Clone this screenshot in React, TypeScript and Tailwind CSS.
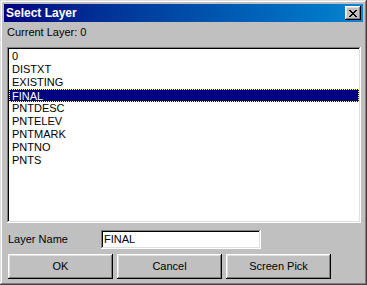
const layers = ['0', 'DISTXT', 'EXISTING', 'FINAL', 'PNTDESC', 'PNTELEV', 'PNTMARK', 'PNTNO', 'PNTS'];

const raised =
  'shadow-[inset_-1px_-1px_#000000,inset_1px_1px_#ffffff,inset_-2px_-2px_#808080,inset_2px_2px_#dfdfdf]';
const sunken =
  'shadow-[inset_-1px_-1px_#ffffff,inset_1px_1px_#808080,inset_-2px_-2px_#dfdfdf,inset_2px_2px_#000000]';

function Button({ label }: { label: string }) {
  return (
    <button className={`w-[105px] h-[25px] bg-[#c0c0c0] text-[11px] text-black ${raised}`}>
      {label}
    </button>
  );
}

export default function App() {
  const selected = 'FINAL';

  return (
    <div
      className="w-[367px] h-[285px] bg-[#c0c0c0] flex flex-col pt-[4px] pl-[4px] pr-[4px] shadow-[inset_-1px_-1px_#404040,inset_1px_1px_#dfdfdf,inset_-2px_-2px_#808080,inset_2px_2px_#ffffff] text-black"
      style={{ fontFamily: '"Liberation Sans", Arial, sans-serif' }}
    >
      <div className="h-[18px] flex items-center justify-between bg-gradient-to-r from-[#000080] to-[#1084d0] pl-[2px] pr-[2px]">
        <span className="text-white font-bold text-[12px] leading-none">Select Layer</span>
        <button className={`w-[16px] h-[14px] bg-[#c0c0c0] flex items-center justify-center ${raised}`}>
          <svg width="8" height="7" viewBox="0 0 8 7" shapeRendering="crispEdges">
            <path
              d="M0 0h2v1h-2zM6 0h2v1h-2zM1 1h2v1h-2zM5 1h2v1h-2zM2 2h4v1h-4zM3 3h2v1h-2zM2 4h4v1h-4zM1 5h2v1h-2zM5 5h2v1h-2zM0 6h2v1h-2zM6 6h2v1h-2z"
              fill="#000"
            />
          </svg>
        </button>
      </div>

      <div className="mt-[4px] pl-[3px] h-[13px] text-[11px] leading-[13px]">Current Layer: 0</div>

      <div className={`mt-[8px] ml-[3px] w-[354px] h-[176px] bg-white pt-[3px] px-[2px] ${sunken}`}>
        {layers.map((name) => (
          <div
            key={name}
            className={`h-[13px] pl-[2px] text-[11px] leading-[12px] ${
              name === selected
                ? 'bg-[#000080] text-white border border-dotted border-[#ffff80] pl-[2px]'
                : 'pl-[3px]'
            }`}
          >
            {name}
          </div>
        ))}
      </div>

      <div className="mt-[7px] flex items-center h-[19px] pl-[4px]">
        <span className="w-[93px] text-[11px]">Layer Name</span>
        <div className={`w-[160px] h-[19px] bg-white pl-[3px] flex items-center text-[11px] ${sunken}`}>
          FINAL
        </div>
      </div>

      <div className="mt-[5px] flex gap-[4px] pl-[4px]">
        <Button label="OK" />
        <Button label="Cancel" />
        <Button label="Screen Pick" />
      </div>
    </div>
  );
}
